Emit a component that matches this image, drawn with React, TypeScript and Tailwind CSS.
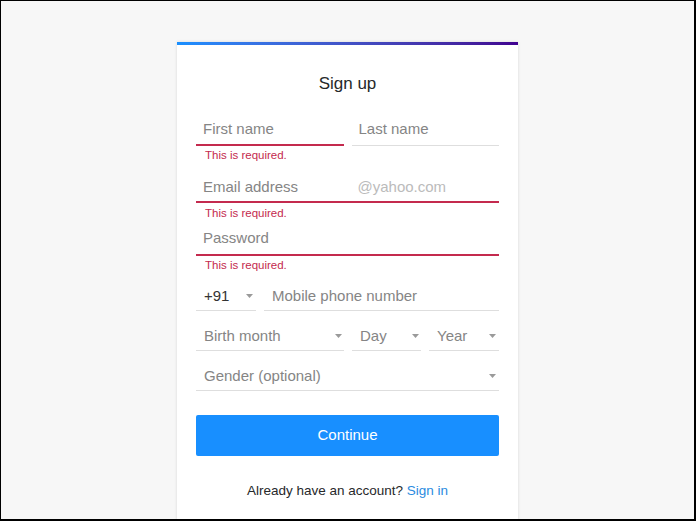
import React from "react";

const Caret = () => (
  <svg width="7" height="4" viewBox="0 0 7 4" className="shrink-0">
    <path d="M0 0 L7 0 L3.5 4 Z" fill="#9a9a9a" />
  </svg>
);

const ErrorText = ({ cls }: { cls: string }) => (
  <div className={`${cls} pl-[9px] text-[11.5px] leading-[14px] text-[#c42a4e]`}>This is required.</div>
);

export default function App() {
  return (
    <div
      className="w-[696px] h-[521px] overflow-hidden bg-[#f7f7f7] border-t border-l border-r-2 border-b-2 border-black"
      style={{ fontFamily: '"Liberation Sans", Arial, sans-serif' }}
    >
      <div className="mx-auto mt-[41px] w-[341px] bg-white shadow-[0_0_3px_rgba(0,0,0,0.13)] pb-[60px]">
        <div className="h-[3px] bg-gradient-to-r from-[#188fff] to-[#400090]" />
        <div className="px-[19px]">
          <div className="mt-[29px] h-[20px] text-center text-[17px] leading-[20px] text-[#26282a]">Sign up</div>

          {/* Row 1 */}
          <div className="mt-[16px] flex gap-[8px]">
            <div className="flex-1 h-[36px] flex items-end pb-[6px] pl-[7px] border-b-2 border-[#c42a4e] text-[15px] leading-[18px] text-[#858585]">
              First name
            </div>
            <div className="flex-1 h-[36px] flex items-end pb-[7px] pl-[7px] border-b border-[#dedede] text-[15px] leading-[18px] text-[#858585]">
              Last name
            </div>
          </div>
          <ErrorText cls="h-[21px] pt-[2px]" />

          {/* Email */}
          <div className="h-[36px] grid grid-cols-2 gap-[8px] items-end pb-[5px] border-b-2 border-[#c42a4e] text-[15px] leading-[18px]">
            <div className="pl-[7px] text-[#858585]">Email address</div>
            <div className="pl-[6px] text-[#bbb]">@yahoo.com</div>
          </div>
          <ErrorText cls="h-[17px] pt-[3px]" />

          {/* Password */}
          <div className="h-[36px] flex items-end pb-[7px] pl-[7px] border-b-2 border-[#c42a4e] text-[15px] leading-[18px] text-[#858585]">
            Password
          </div>
          <ErrorText cls="h-[19px] pt-[2px]" />

          {/* Phone */}
          <div className="flex gap-[8px] text-[15px] leading-[18px]">
            <div className="w-[60px] h-[36px] flex items-end justify-between pb-[5px] pl-[8px] pr-[3px] border-b border-[#dedede]">
              <span className="text-[#333]">+91</span>
              <span className="mb-[7px]"><Caret /></span>
            </div>
            <div className="flex-1 h-[36px] flex items-end pb-[5px] pl-[8px] border-b border-[#dedede] text-[#858585]">
              Mobile phone number
            </div>
          </div>

          {/* Birth */}
          <div className="mt-[4px] flex gap-[8px] text-[15px] leading-[18px] text-[#858585]">
            <div className="w-[148px] h-[36px] flex items-end justify-between pb-[5px] pl-[8px] pr-[2px] border-b border-[#dedede]">
              <span>Birth month</span>
              <span className="mb-[7px]"><Caret /></span>
            </div>
            <div className="w-[69px] h-[36px] flex items-end justify-between pb-[5px] pl-[8px] pr-[2px] border-b border-[#dedede]">
              <span>Day</span>
              <span className="mb-[7px]"><Caret /></span>
            </div>
            <div className="flex-1 h-[36px] flex items-end justify-between pb-[5px] pl-[8px] pr-[3px] border-b border-[#dedede]">
              <span>Year</span>
              <span className="mb-[7px]"><Caret /></span>
            </div>
          </div>

          {/* Gender */}
          <div className="mt-[4px] h-[36px] flex items-end justify-between pb-[5px] pl-[8px] pr-[3px] border-b border-[#dedede] text-[15px] leading-[18px] text-[#858585]">
            <span>Gender (optional)</span>
            <span className="mb-[7px]"><Caret /></span>
          </div>

          <button className="mt-[24px] w-full h-[41px] rounded-[2px] bg-[#188fff] text-white text-[15px]">
            Continue
          </button>

          <div className="mt-[25px] text-center text-[13.5px] leading-[20px] text-[#26282a]">
            Already have an account? <span className="text-[#2a8be0]">Sign in</span>
          </div>
        </div>
      </div>
    </div>
  );
}
